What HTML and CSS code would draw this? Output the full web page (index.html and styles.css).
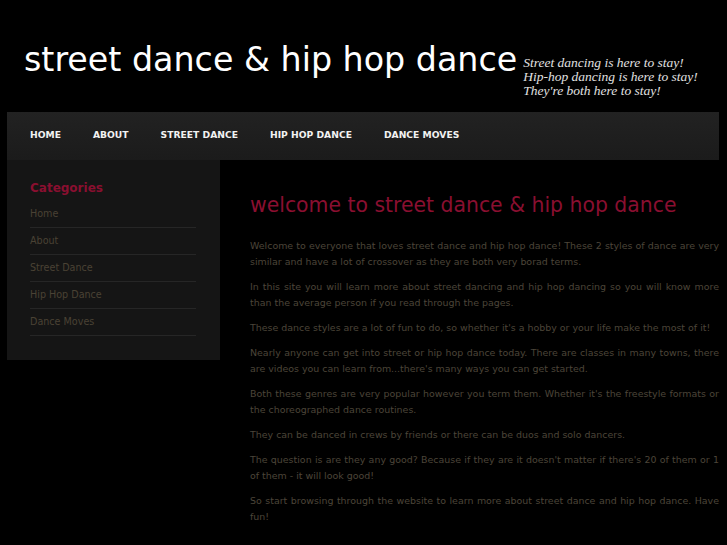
FILE: index.html
```
<!DOCTYPE html>
<html>
<head>
<meta charset="utf-8">
<link rel="stylesheet" href="styles.css">
</head>
<body>
<header class="header">
  <h1 class="site-title">street dance &amp; hip hop dance</h1>
  <p class="tagline">Street dancing is here to stay!<br>Hip-hop dancing is here to stay!<br>They're both here to stay!</p>
</header>
<nav class="nav">
  <a href="#">HOME</a>
  <a href="#">ABOUT</a>
  <a href="#">STREET DANCE</a>
  <a href="#">HIP HOP DANCE</a>
  <a href="#">DANCE MOVES</a>
</nav>
<div class="container">
  <aside class="sidebar">
    <h3 class="side-title">Categories</h3>
    <ul class="side-list">
      <li><a href="#">Home</a></li>
      <li><a href="#">About</a></li>
      <li><a href="#">Street Dance</a></li>
      <li><a href="#">Hip Hop Dance</a></li>
      <li><a href="#">Dance Moves</a></li>
    </ul>
  </aside>
  <main class="main">
    <h2 class="main-title">welcome to street dance &amp; hip hop dance</h2>
    <p>Welcome to everyone that loves street dance and hip hop dance! These 2 styles of dance are very similar and have a lot of crossover as they are both very borad terms.</p>
    <p>In this site you will learn more about street dancing and hip hop dancing so you will know more than the average person if you read through the pages.</p>
    <p>These dance styles are a lot of fun to do, so whether it's a hobby or your life make the most of it!</p>
    <p>Nearly anyone can get into street or hip hop dance today. There are classes in many towns, there are videos you can learn from...there's many ways you can get started.</p>
    <p>Both these genres are very popular however you term them. Whether it's the freestyle formats or the choreographed dance routines.</p>
    <p>They can be danced in crews by friends or there can be duos and solo dancers.</p>
    <p>The question is are they any good? Because if they are it doesn't matter if there's 20 of them or 1 of them - it will look good!</p>
    <p>So start browsing through the website to learn more about street dance and hip hop dance. Have fun!</p>
  </main>
</div>
</body>
</html>
```
FILE: styles.css
```
html, body {
  margin: 0;
  padding: 0;
  background: #000;
}
body {
  font-family: "DejaVu Sans", sans-serif;
  width: 727px;
  overflow: hidden;
}
.header {
  display: flex;
  align-items: flex-start;
  height: 112px;
  box-sizing: border-box;
  padding: 41px 0 0 24px;
}
.site-title {
  margin: 0;
  font-weight: normal;
  font-size: 33.3px;
  line-height: 38px;
  color: #fff;
  white-space: nowrap;
}
.tagline {
  margin: 15px 0 0 6px;
  font-family: "Liberation Serif", serif;
  font-style: italic;
  font-size: 13.5px;
  line-height: 14px;
  color: #e0e0e0;
  white-space: nowrap;
}
.nav {
  display: flex;
  margin: 0 8px 0 7px;
  height: 48px;
  box-sizing: border-box;
  padding: 16px 0 0 7px;
  background: linear-gradient(#222, #1b1b1b);
}
.nav a {
  padding: 0 16px;
  font-size: 9.2px;
  font-weight: bold;
  line-height: 14px;
  color: #f2f2f2;
  text-decoration: none;
}
.container {
  display: flex;
  align-items: flex-start;
}
.sidebar {
  width: 213px;
  height: 200px;
  box-sizing: border-box;
  margin-left: 7px;
  padding: 20px 24px 0 23px;
  background: #151515;
}
.side-title {
  margin: 0 0 5px;
  font-size: 12px;
  line-height: 16px;
  font-weight: bold;
  color: #8a0f30;
}
.side-list {
  list-style: none;
  margin: 0;
  padding: 0;
}
.side-list li {
  padding: 5px 0;
  border-bottom: 1px solid #262626;
}
.side-list a {
  font-size: 9.6px;
  line-height: 16px;
  color: #4a4234;
  text-decoration: none;
  display: block;
}
.main {
  width: 469px;
  margin-left: 30px;
}
.main-title {
  margin: 33px 0 21px;
  font-weight: normal;
  font-size: 20.4px;
  line-height: 24px;
  color: #8a0f30;
  white-space: nowrap;
}
.main p {
  margin: 0 0 9px;
  font-size: 9.45px;
  line-height: 16px;
  color: #4c4539;
  text-align: justify;
}
```
